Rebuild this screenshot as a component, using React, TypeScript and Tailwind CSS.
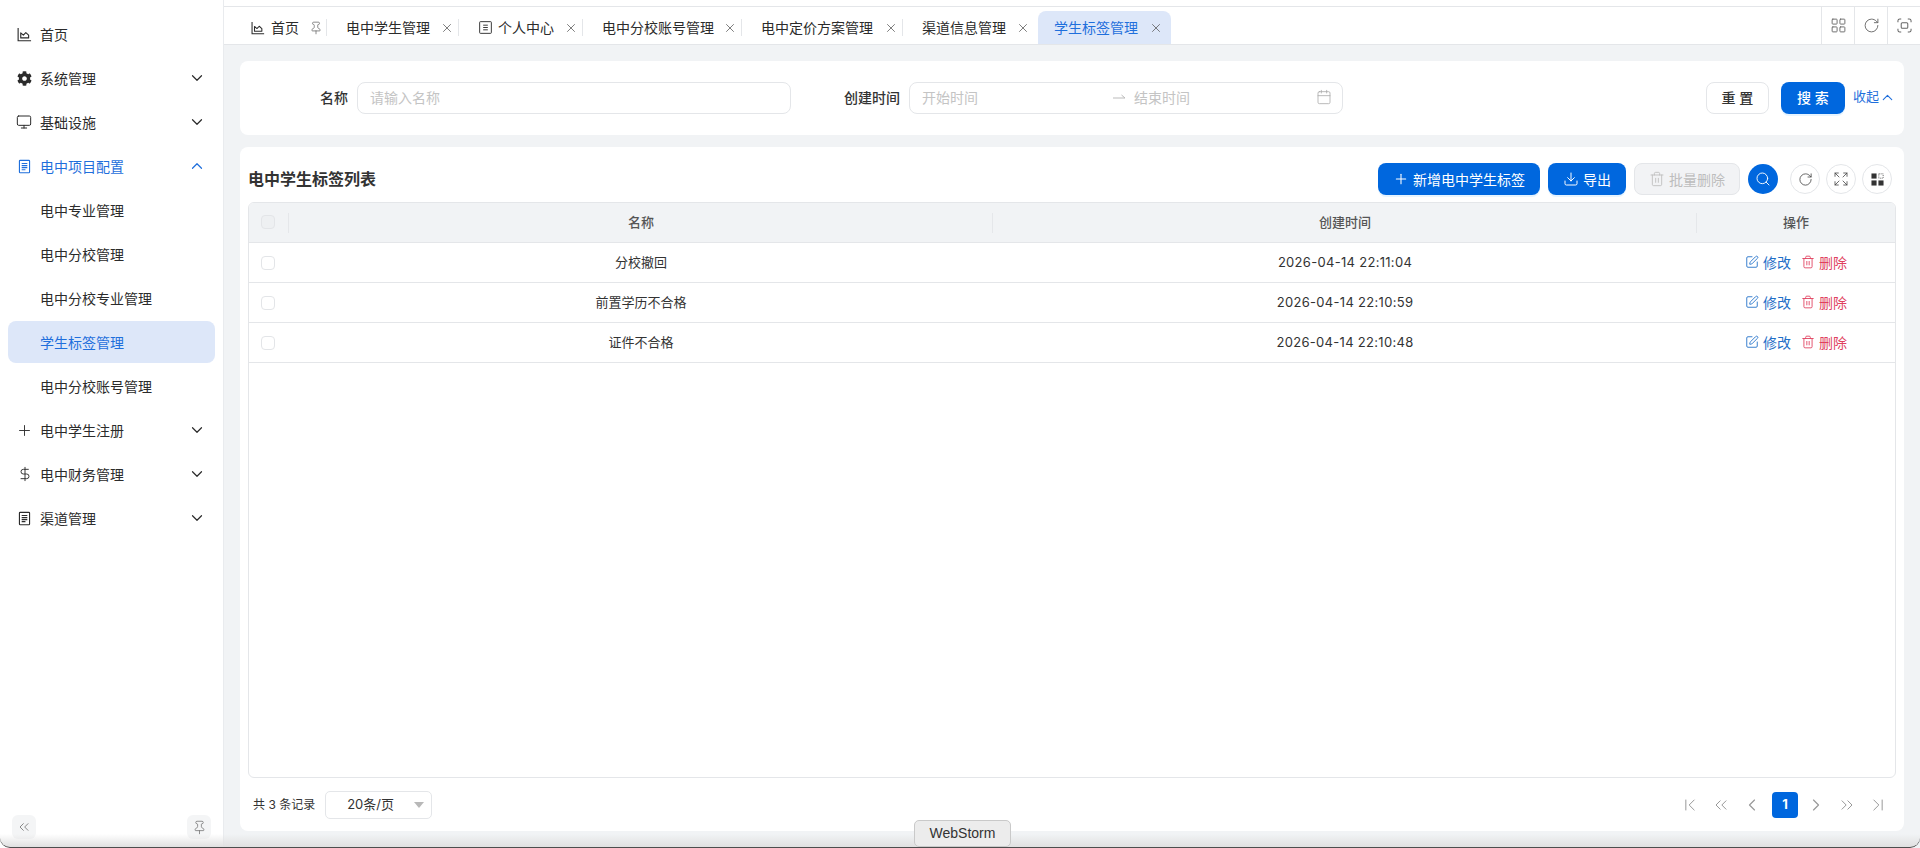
import React from 'react';
import {
  ChevronDown,
  ChevronUp,
  ChevronFirst,
  ChevronLast,
  ChevronLeft,
  ChevronRight,
  ChevronsLeft,
  ChevronsRight,
  Monitor,
  Plus,
  DollarSign,
  Pin,
  X,
  LayoutGrid,
  RotateCw,
  Search,
  Expand,
  SquarePen,
  Trash2,
  Download,
  Calendar,
} from 'lucide-react';
import { FaCog } from 'react-icons/fa';

const ChartIcon = ({ className }: { className?: string }) => (
  <svg viewBox="0 0 16 16" fill="none" stroke="currentColor" strokeWidth="1.2" className={className}>
    <path d="M1.2 1v13.6h13.8" />
    <path d="M4 11.6V6.2l2.8 2.4L9.4 6l3 2.6v3z" strokeLinejoin="round" />
  </svg>
);

const DocIcon = ({ className }: { className?: string }) => (
  <svg viewBox="0 0 16 16" fill="none" stroke="currentColor" strokeWidth="1.2" className={className}>
    <rect x="2.6" y="1.4" width="10.8" height="13.2" rx="0.8" />
    <path d="M5 4.8h6M5 7h6M5 9.2h6M5 11.4h4" />
  </svg>
);

const ProfileIcon = () => (
  <svg viewBox="0 0 14 14" fill="none" stroke="currentColor" strokeWidth="1" className="w-[13px] h-[13px] mr-[6px]">
    <rect x="0.7" y="0.7" width="12.6" height="12.6" rx="0.8" />
    <path d="M4.5 4.5h5M4.5 7h5M4.5 9.5h5" />
  </svg>
);

const ScanBox = () => (
  <svg viewBox="0 0 16 16" fill="none" stroke="currentColor" strokeWidth="1.1" className="w-[15px] h-[15px] text-[#666]">
    <path d="M1 4.5V3a2 2 0 0 1 2-2h1.5M11.5 1H13a2 2 0 0 1 2 2v1.5M15 11.5V13a2 2 0 0 1-2 2h-1.5M4.5 15H3a2 2 0 0 1-2-2v-1.5" />
    <rect x="4.5" y="5" width="7" height="6" rx="1.2" />
  </svg>
);

const ColumnsIcon = () => (
  <svg viewBox="0 0 14 14" className="w-[13px] h-[13px] text-[#333]" fill="currentColor">
    <rect x="0.5" y="0.5" width="5.5" height="5.5" />
    <rect x="0.5" y="8" width="5.5" height="5.5" />
    <rect x="8" y="8" width="5.5" height="5.5" />
    <rect x="8.4" y="0.9" width="4.7" height="4.7" fill="none" stroke="currentColor" strokeWidth="0.8" strokeDasharray="1 1" />
  </svg>
);

type MenuItem = {
  label: string;
  icon?: React.ReactNode;
  arrow?: 'down' | 'up';
  open?: boolean;
  active?: boolean;
};

const menu: MenuItem[] = [
  { label: '首页', icon: <ChartIcon className="w-[15px] h-[15px]" /> },
  { label: '系统管理', icon: <FaCog className="w-[15px] h-[15px]" />, arrow: 'down' },
  { label: '基础设施', icon: <Monitor className="w-[16px] h-[16px] -ml-[1px]" strokeWidth={1.5} />, arrow: 'down' },
  { label: '电中项目配置', icon: <DocIcon className="w-[15px] h-[15px]" />, arrow: 'up', open: true },
  { label: '电中专业管理' },
  { label: '电中分校管理' },
  { label: '电中分校专业管理' },
  { label: '学生标签管理', active: true },
  { label: '电中分校账号管理' },
  { label: '电中学生注册', icon: <Plus className="w-[17px] h-[17px] -ml-[1px]" strokeWidth={1.3} />, arrow: 'down' },
  { label: '电中财务管理', icon: <DollarSign className="w-[16px] h-[16px]" strokeWidth={1.4} />, arrow: 'down' },
  { label: '渠道管理', icon: <DocIcon className="w-[15px] h-[15px]" />, arrow: 'down' },
];

const Sidebar = () => (
  <aside className="w-[224px] shrink-0 bg-white border-r border-[#e9ebee] flex flex-col justify-between pb-[9px]">
    <nav className="pt-[13px] px-[8px] flex flex-col gap-[2px]">
      {menu.map((item) => (
        <div
          key={item.label}
          className={`h-[42px] flex items-center rounded-[8px] text-[14px] ${
            item.active ? 'bg-[#dde7f9] text-[#1f6fdc]' : item.open ? 'text-[#1f6fdc]' : 'text-[#2b2b2b]'
          }`}
        >
          <span className="w-[33px] pl-[9px] shrink-0 flex items-center">{item.icon}</span>
          <span className="-ml-[1px]">{item.label}</span>
          {item.arrow === 'down' && <ChevronDown className="ml-auto mr-[9px] w-[18px] h-[18px]" strokeWidth={1.6} />}
          {item.arrow === 'up' && <ChevronUp className="ml-auto mr-[9px] w-[18px] h-[18px]" strokeWidth={1.6} />}
        </div>
      ))}
    </nav>
    <div className="flex justify-between px-[12px]">
      <button className="w-[24px] h-[24px] rounded-[6px] bg-[#f4f5f6] flex items-center justify-center text-[#777]">
        <ChevronsLeft className="w-[16px] h-[16px]" strokeWidth={1.3} />
      </button>
      <button className="w-[24px] h-[24px] rounded-[6px] bg-[#f4f5f6] flex items-center justify-center text-[#777]">
        <Pin className="w-[15px] h-[15px]" strokeWidth={1.3} />
      </button>
    </div>
  </aside>
);

type TabItem = {
  label: string;
  width: string;
  icon?: React.ReactNode;
  pad: string;
  pin?: boolean;
  sep?: boolean;
  active?: boolean;
};

const tabs: TabItem[] = [
  { label: '首页', width: 'w-[103px]', pad: 'pl-[27px]', icon: <ChartIcon className="w-[14px] h-[14px] mr-[6px]" />, pin: true, sep: true },
  { label: '电中学生管理', width: 'w-[132px]', pad: 'pl-[19px]', sep: true },
  { label: '个人中心', width: 'w-[124px]', pad: 'pl-[20px]', icon: <ProfileIcon />, sep: true },
  { label: '电中分校账号管理', width: 'w-[159px]', pad: 'pl-[19px]', sep: true },
  { label: '电中定价方案管理', width: 'w-[161px]', pad: 'pl-[19px]', sep: true },
  { label: '渠道信息管理', width: 'w-[135px]', pad: 'pl-[19px]' },
  { label: '学生标签管理', width: 'w-[133px]', pad: 'pl-[16px]', active: true },
];

const TabBar = () => (
  <div className="pt-[6px] bg-white">
    <div className="h-[39px] border-y border-[#e4e6e9] flex justify-between">
      <div className="flex items-end">
        {tabs.map((tab) => (
          <div
            key={tab.label}
            className={`${tab.width} ${tab.pad} h-[33px] flex items-center text-[14px] whitespace-nowrap ${
              tab.active ? 'bg-[#dde7f9] text-[#1f6fdc] rounded-t-[8px]' : 'text-[#2b2b2b]'
            }`}
          >
            {tab.icon}
            <span>{tab.label}</span>
            {tab.pin ? (
              <Pin className="ml-auto w-[14px] h-[14px] text-[#666] mr-[3px]" strokeWidth={1.3} />
            ) : (
              <X className={`ml-auto w-[14px] h-[14px] text-[#555] ${tab.sep ? 'mr-[4px]' : 'mr-[8px]'}`} strokeWidth={1.3} />
            )}
            {tab.sep && <span className="w-px h-[17px] bg-[#e4e6e9]" />}
          </div>
        ))}
      </div>
      <div className="flex">
        <div className="w-[33px] border-l border-[#e4e6e9] flex items-center justify-center">
          <LayoutGrid className="w-[17px] h-[17px] text-[#666]" strokeWidth={1.3} />
        </div>
        <div className="w-[33px] border-l border-[#e4e6e9] flex items-center justify-center">
          <RotateCw className="w-[17px] h-[17px] text-[#666]" strokeWidth={1.3} />
        </div>
        <div className="w-[33px] border-l border-[#e4e6e9] flex items-center justify-center">
          <ScanBox />
        </div>
      </div>
    </div>
  </div>
);

const SearchPanel = () => (
  <section className="h-[74px] bg-white rounded-[8px] flex items-center shrink-0 text-[14px]">
    <label className="w-[117px] pr-[9px] pb-[2px] text-right font-medium text-[#333]">名称</label>
    <div className="w-[434px] h-[32px] border border-[#e4e6e9] rounded-[8px] px-[12px] pb-[2px] flex items-center text-[#c4c4c4]">
      请输入名称
    </div>
    <label className="w-[118px] pr-[9px] pb-[2px] text-right font-medium text-[#333]">创建时间</label>
    <div className="w-[434px] h-[32px] border border-[#e4e6e9] rounded-[8px] pl-[12px] pr-[10px] pb-[2px] flex items-center text-[#c4c4c4]">
      <span className="w-[190px]">开始时间</span>
      <svg viewBox="0 0 14 8" fill="none" stroke="currentColor" strokeWidth="1" className="w-[14px] h-[8px] text-[#bbb]">
        <path d="M1 5h12L9.5 2" />
      </svg>
      <span className="ml-[8px]">结束时间</span>
      <Calendar className="ml-auto w-[16px] h-[16px] text-[#aaa]" strokeWidth={1.2} />
    </div>
    <button className="ml-auto w-[63px] h-[32px] border border-[#e4e6e9] rounded-[8px] pb-[2px] bg-white text-[#333] font-medium">
      重 置
    </button>
    <button className="ml-[12px] w-[64px] h-[32px] rounded-[8px] pb-[2px] bg-[#0067de] text-white font-medium shadow-[0_2px_0_rgba(5,145,255,0.1)]">
      搜 索
    </button>
    <span className="ml-[8px] mr-[8px] pb-[2px] flex items-center text-[13px] text-[#1f6fdc] whitespace-nowrap">
      收起
      <ChevronUp className="w-[17px] h-[17px]" strokeWidth={1.5} />
    </span>
  </section>
);

const rows = [
  { name: '分校撤回', createdAt: '2026-04-14 22:11:04' },
  { name: '前置学历不合格', createdAt: '2026-04-14 22:10:59' },
  { name: '证件不合格', createdAt: '2026-04-14 22:10:48' },
];

const Checkbox = ({ dim }: { dim?: boolean }) => (
  <span className={`block w-[14px] h-[14px] rounded-[4px] border border-[#e3e5e8] mx-auto -translate-x-[1px] ${dim ? 'bg-[#eef0f2]' : 'bg-white'}`} />
);

const HeadCell = ({ label, sep = true, children }: { label?: string; sep?: boolean; children?: React.ReactNode }) => (
  <th className="relative font-medium text-[13px] text-[#555] p-0">
    {label}
    {children}
    {sep && <span className="absolute right-0 top-[10px] h-[20px] w-px bg-[#e5e7ea]" />}
  </th>
);

const TableCard = () => (
  <section className="flex-1 min-h-0 bg-white rounded-[8px] px-[8px] flex flex-col">
    <div className="h-[55px] flex items-center shrink-0 pt-[9px]">
      <h2 className="text-[16px] font-semibold text-[#333]">电中学生标签列表</h2>
      <div className="ml-auto mr-[4px] flex items-center text-[14px]">
        <button className="w-[162px] h-[32px] rounded-[8px] bg-[#0067de] text-white flex items-center justify-center shadow-[0_2px_0_rgba(5,145,255,0.1)]">
          <Plus className="w-[16px] h-[16px] mr-[4px]" strokeWidth={1.6} />
          新增电中学生标签
        </button>
        <button className="ml-[8px] w-[78px] h-[32px] rounded-[8px] bg-[#0067de] text-white flex items-center justify-center shadow-[0_2px_0_rgba(5,145,255,0.1)]">
          <Download className="w-[16px] h-[16px] mr-[4px]" strokeWidth={1.5} />
          导出
        </button>
        <button className="ml-[8px] w-[106px] h-[32px] rounded-[8px] bg-[#f2f3f5] border border-[#e4e6e9] text-[#bdbdbd] flex items-center justify-center">
          <Trash2 className="w-[16px] h-[16px] mr-[4px]" strokeWidth={1.3} />
          批量删除
        </button>
        <button className="ml-[8px] w-[30px] h-[30px] rounded-full bg-[#0067de] text-white flex items-center justify-center">
          <Search className="w-[16px] h-[16px]" strokeWidth={1.4} />
        </button>
        <button className="ml-[12px] w-[30px] h-[30px] rounded-full border border-[#e4e6e9] text-[#444] flex items-center justify-center">
          <RotateCw className="w-[15px] h-[15px]" strokeWidth={1.3} />
        </button>
        <button className="ml-[6px] w-[30px] h-[30px] rounded-full border border-[#e4e6e9] text-[#444] flex items-center justify-center">
          <Expand className="w-[16px] h-[16px]" strokeWidth={1.2} />
        </button>
        <button className="ml-[6px] w-[30px] h-[30px] rounded-full border border-[#e4e6e9] flex items-center justify-center">
          <ColumnsIcon />
        </button>
      </div>
    </div>
    <div className="flex-1 min-h-0 border border-[#e4e6e9] rounded-[6px] overflow-hidden">
      <table className="w-full table-fixed text-[13px] text-[#333] border-collapse">
        <colgroup>
          <col className="w-[40px]" />
          <col className="w-[704px]" />
          <col className="w-[704px]" />
          <col />
        </colgroup>
        <thead>
          <tr className="h-[39px] bg-[#f1f3f5] border-b border-[#e4e6e9]">
            <HeadCell>
              <Checkbox dim />
            </HeadCell>
            <HeadCell label="名称" />
            <HeadCell label="创建时间" />
            <HeadCell label="操作" sep={false} />
          </tr>
        </thead>
        <tbody>
          {rows.map((row) => (
            <tr key={row.name} className="h-[40px] border-b border-[#e4e6e9]">
              <td className="p-0 pt-[2px]"><Checkbox /></td>
              <td className="p-0 pt-[2px] text-center">{row.name}</td>
              <td className="p-0 pt-[2px] text-center tracking-[0.3px]">{row.createdAt}</td>
              <td className="p-0">
                <div className="flex items-center justify-center gap-[10px] text-[14px]">
                  <span className="flex items-center text-[#1f6fc8]">
                    <SquarePen className="w-[14px] h-[14px] mr-[4px]" strokeWidth={1.5} />
                    修改
                  </span>
                  <span className="flex items-center text-[#e0405e]">
                    <Trash2 className="w-[14px] h-[14px] mr-[4px]" strokeWidth={1.5} />
                    删除
                  </span>
                </div>
              </td>
            </tr>
          ))}
        </tbody>
      </table>
    </div>
    <footer className="h-[53px] shrink-0 flex items-center text-[12px] text-[#333] pl-[5px] pr-[8px]">
      <span>共 3 条记录</span>
      <div className="ml-[10px] w-[107px] h-[28px] border border-[#e4e6e9] rounded-[5px] flex items-center pl-[21px] pr-[7px] text-[13px]">
        20条/页
        <span className="ml-auto w-0 h-0 border-x-[5px] border-x-transparent border-t-[6px] border-t-[#b8b8b8]" />
      </div>
      <div className="ml-auto flex items-center text-[#999]">
        <ChevronFirst className="w-[20px] h-[20px]" strokeWidth={1.2} />
        <ChevronsLeft className="ml-[11px] w-[20px] h-[20px]" strokeWidth={1.2} />
        <ChevronLeft className="ml-[11px] w-[20px] h-[20px]" strokeWidth={1.4} />
        <span className="ml-[10px] w-[26px] h-[26px] rounded-[4px] bg-[#0067de] text-white font-bold text-[13px] flex items-center justify-center">1</span>
        <ChevronRight className="ml-[8px] w-[20px] h-[20px]" strokeWidth={1.4} />
        <ChevronsRight className="ml-[11px] w-[20px] h-[20px]" strokeWidth={1.2} />
        <ChevronLast className="ml-[11px] w-[20px] h-[20px]" strokeWidth={1.2} />
      </div>
    </footer>
  </section>
);

const App: React.FC = () => {
  return (
    <div className="relative w-[1920px] h-[848px] overflow-hidden flex bg-[#f1f3f5] font-[family-name:Inter,'Noto_Sans_CJK_SC',sans-serif]">
      <Sidebar />
      <main className="flex-1 min-w-0 flex flex-col">
        <TabBar />
        <div className="flex-1 min-h-0 flex flex-col gap-[12px] px-[16px] pt-[16px] pb-[17px]">
          <SearchPanel />
          <TableCard />
        </div>
      </main>

      {/* window edge of the captured desktop */}
      <div className="absolute inset-x-0 bottom-0 h-[14px] bg-linear-to-b from-transparent to-[#e0e0e0] border-b border-[#4d4d4d] rounded-b-[10px]" />
      <div className="absolute left-[914px] bottom-[1px] w-[97px] h-[27px] rounded-[5px] bg-[#ececec] border border-[#c9c9c9] flex items-center justify-center text-[14px] text-[#333] font-[family-name:'Liberation_Sans',sans-serif]">
        WebStorm
      </div>
    </div>
  );
};

export default App;
